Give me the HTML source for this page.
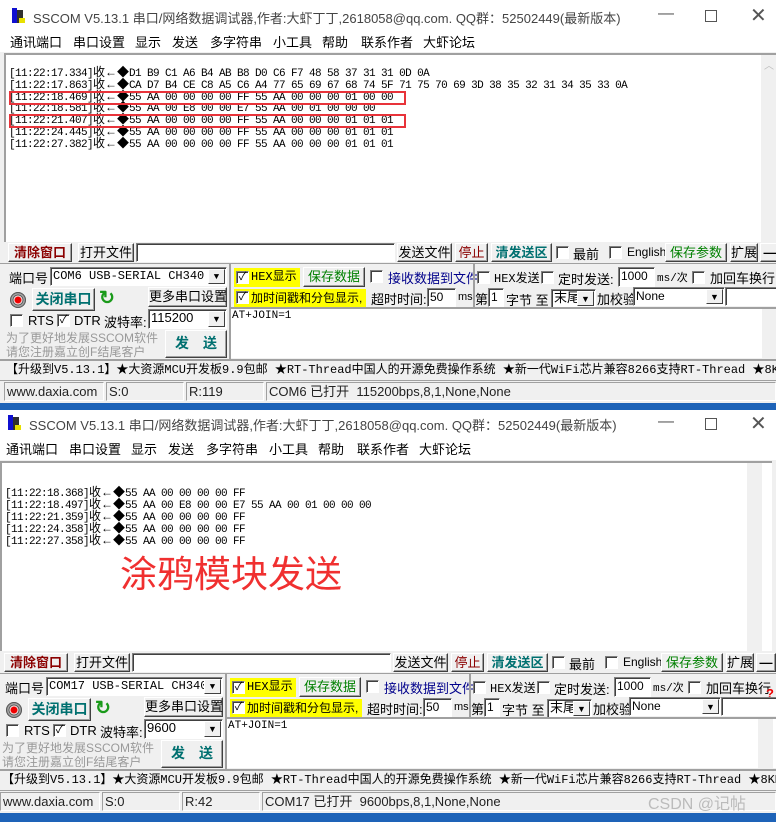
<!DOCTYPE html>
<html><head><meta charset="utf-8"><style>
*{box-sizing:border-box;margin:0;padding:0}
body{width:776px;height:822px;overflow:hidden;background:#1e63b8;position:relative;font-family:"Liberation Sans","Noto Sans CJK SC",sans-serif;font-size:12px;color:#000}
.win{position:absolute;left:0;width:790px;height:403px;background:#f0f0f0;overflow:hidden}
.a{position:absolute;white-space:nowrap}
.title{left:0;top:0;width:100%;height:32px;background:#fff}
.menu{left:0;top:32px;width:100%;height:20px;background:#fff;font-size:13px}
.b{position:absolute;background:#f0f0f0;border:1px solid;border-color:#fff #404040 #404040 #fff;box-shadow:inset -1px -1px 0 #a0a0a0;text-align:center;font-size:13px;line-height:17px;white-space:nowrap}
.in{position:absolute;background:#fff;border:1px solid;border-color:#808080 #fff #fff #808080;box-shadow:inset 1px 1px 0 #404040;font-size:12px;line-height:16px;padding-left:2px;white-space:nowrap;overflow:hidden}
.cb{position:absolute;width:13px;height:13px;background:#fff;border:1px solid;border-color:#808080 #fff #fff #808080;box-shadow:inset 1px 1px 0 #404040;font-size:11px;line-height:11px;text-align:center}
.dd{position:absolute;right:1px;top:1px;width:17px;bottom:1px;background:#f0f0f0;border:1px solid;border-color:#fff #404040 #404040 #fff;font-size:9px;text-align:center;line-height:15px}
.mono{font-family:"Liberation Mono","Noto Sans CJK SC",monospace}
.rx{position:absolute;left:4px;top:53px;width:772px;height:189px;background:#fff;border-top:2px solid #a0a0a0;border-left:2px solid #a0a0a0}
.rx .l{position:absolute;left:3px;font-family:"Liberation Mono","Noto Sans CJK SC",monospace;font-size:11px;letter-spacing:-0.6px;line-height:12px;white-space:nowrap}
.rx .l i{display:inline-block;width:12px;font-style:normal;text-align:center;font-size:12px;line-height:11px;letter-spacing:0}
.sb{position:absolute;right:0;top:0;width:15px;height:100%;background:#f0f0f0}
.st{position:absolute;top:382px;height:19px;border:1px solid;border-color:#a0a0a0 #fff #fff #a0a0a0;font-size:13px;line-height:17px;padding-left:2px;color:#222;white-space:nowrap;overflow:hidden}
.y{position:absolute;background:#ffff00;font-size:12px;line-height:18px;white-space:nowrap}
</style></head><body>

<!-- WINDOW 1 -->
<div class="win" style="top:0">
 <div class="a title">
  <div class="a" style="left:12px;top:8px;width:5px;height:15px;background:#1010d0"></div>
  <div class="a" style="left:17px;top:10px;width:6px;height:13px;background:#303030"></div>
  <div class="a" style="left:19px;top:18px;width:6px;height:5px;background:#e8e000"></div>
  <div class="a" style="left:33px;top:8px;font-size:13px;color:#444">SSCOM V5.13.1 串口/网络数据调试器,作者:大虾丁丁,2618058@qq.com. QQ群：52502449(最新版本)</div>
  <div class="a" style="left:658px;top:5px;font-size:16px;color:#555">—</div>
  <div class="a" style="left:705px;top:10px;width:12px;height:12px;border:1px solid #555"></div>
  <div class="a" style="left:750px;top:3px;font-size:20px;color:#555">✕</div>
 </div>
 <div class="a menu">
  <span class="a" style="left:10px;top:0">通讯端口</span><span class="a" style="left:73px;top:0">串口设置</span><span class="a" style="left:135px;top:0">显示</span><span class="a" style="left:172px;top:0">发送</span><span class="a" style="left:210px;top:0">多字符串</span><span class="a" style="left:273px;top:0">小工具</span><span class="a" style="left:322px;top:0">帮助</span><span class="a" style="left:361px;top:0">联系作者</span><span class="a" style="left:423px;top:0">大虾论坛</span>
 </div>
 <div class="rx">
  <div class="l" style="top:13px">[11:22:17.334]<i>收</i><i>←</i><i>◆</i>D1 B9 C1 A6 B4 AB B8 D0 C6 F7 48 58 37 31 31 0D 0A</div>
  <div class="l" style="top:25px">[11:22:17.863]<i>收</i><i>←</i><i>◆</i>CA D7 B4 CE C8 A5 C6 A4 77 65 69 67 68 74 5F 71 75 70 69 3D 38 35 32 31 34 35 33 0A</div>
  <div class="l" style="top:37px">[11:22:18.469]<i>收</i><i>←</i><i>◆</i>55 AA 00 00 00 00 FF 55 AA 00 00 00 01 00 00</div>
  <div class="l" style="top:48px">[11:22:18.581]<i>收</i><i>←</i><i>◆</i>55 AA 00 E8 00 00 E7 55 AA 00 01 00 00 00</div>
  <div class="l" style="top:60px">[11:22:21.407]<i>收</i><i>←</i><i>◆</i>55 AA 00 00 00 00 FF 55 AA 00 00 00 01 01 01</div>
  <div class="l" style="top:72px">[11:22:24.445]<i>收</i><i>←</i><i>◆</i>55 AA 00 00 00 00 FF 55 AA 00 00 00 01 01 01</div>
  <div class="l" style="top:84px">[11:22:27.382]<i>收</i><i>←</i><i>◆</i>55 AA 00 00 00 00 FF 55 AA 00 00 00 01 01 01</div>
  <div class="a" style="left:3px;top:36px;width:397px;height:14px;border:2px solid #e8333a"></div>
  <div class="a" style="left:3px;top:59px;width:397px;height:14px;border:2px solid #e8333a"></div>
  <div class="sb"><div class="a" style="left:3px;top:2px;color:#bbb;font-size:10px">︿</div></div>
 </div>
 <div class="b" style="left:8px;top:243px;width:64px;height:19px;color:#8b0000;font-weight:bold">清除窗口</div>
 <div class="b" style="left:78px;top:243px;width:56px;height:19px">打开文件</div>
 <div class="in" style="left:136px;top:243px;width:259px;height:19px"></div>
 <div class="b" style="left:397px;top:243px;width:55px;height:19px">发送文件</div>
 <div class="b" style="left:455px;top:243px;width:33px;height:19px;color:#8b0000">停止</div>
 <div class="b" style="left:491px;top:243px;width:61px;height:19px;color:#007070;font-weight:bold">清发送区</div>
 <div class="cb" style="left:556px;top:246px"></div><span class="a" style="left:573px;top:244px;font-size:13px">最前</span>
 <div class="cb" style="left:609px;top:246px"></div><span class="a" style="left:627px;top:245px;font-size:12px">English</span>
 <div class="b" style="left:665px;top:243px;width:62px;height:19px;color:#008000">保存参数</div>
 <div class="b" style="left:730px;top:243px;width:28px;height:19px">扩展</div>
 <div class="b" style="left:760px;top:243px;width:20px;height:19px;font-weight:bold">—</div>
 <div class="a" style="left:0;top:263px;width:790px;height:1px;background:#a0a0a0"></div>
 <span class="a" style="left:9px;top:268px;font-size:13px">端口号</span>
 <div class="in mono" style="left:50px;top:267px;width:177px;height:19px">COM6 USB-SERIAL CH340<div class="dd">▼</div></div>
 <div class="a" style="left:10px;top:292px;width:16px;height:16px;border-radius:50%;background:radial-gradient(circle,#e00 0,#e00 3px,#fff 4px,#444 5px,#bbb 6px,#333 8px)"></div>
 <div class="b" style="left:32px;top:288px;width:63px;height:23px;color:#007070;font-weight:bold;font-size:14px;line-height:20px">关闭串口</div>
 <div class="a" style="left:99px;top:287px;font-size:19px;font-weight:bold;color:#1a9a1a">↻</div>
 <div class="b" style="left:148px;top:287px;width:79px;height:20px">更多串口设置</div>
 <div class="cb" style="left:10px;top:314px"></div><span class="a" style="left:28px;top:313px;font-size:13px">RTS</span>
 <div class="cb" style="left:57px;top:314px">✓</div><span class="a" style="left:74px;top:313px;font-size:13px">DTR</span>
 <span class="a" style="left:104px;top:312px;font-size:13px">波特率:</span>
 <div class="in" style="left:148px;top:309px;width:79px;height:20px;font-size:13px">115200<div class="dd">▼</div></div>
 <div class="a" style="left:6px;top:331px;font-size:12px;line-height:14px;color:#999">为了更好地发展SSCOM软件<br>请您注册嘉立创F结尾客户</div>
 <div class="b" style="left:165px;top:330px;width:62px;height:28px;color:#007070;font-weight:bold;font-size:14px;line-height:25px">发　送</div>
 <div class="a" style="left:229px;top:264px;width:2px;height:95px;background:#a0a0a0"></div>
 <div class="y" style="left:234px;top:268px;width:66px;height:19px"><div class="cb" style="left:2px;top:3px;position:absolute">✓</div><span class="mono" style="position:absolute;left:17px">HEX显示</span></div>
 <div class="b" style="left:303px;top:267px;width:62px;height:20px;color:#008000">保存数据</div>
 <div class="cb" style="left:370px;top:270px"></div><span class="a" style="left:388px;top:268px;font-size:13px;color:#00008b">接收数据到文件</span>
 <div class="a" style="left:473px;top:264px;width:2px;height:44px;background:#a0a0a0"></div>
 <div class="cb" style="left:477px;top:271px"></div><span class="a mono" style="left:494px;top:269px;font-size:12px">HEX发送</span>
 <div class="cb" style="left:541px;top:271px"></div><span class="a" style="left:558px;top:269px;font-size:13px">定时发送:</span>
 <div class="in" style="left:618px;top:267px;width:37px;height:20px;font-size:12px">1000</div>
 <span class="a mono" style="left:657px;top:269px;font-size:11px">ms/次</span>
 <div class="cb" style="left:692px;top:271px"></div><span class="a" style="left:710px;top:268px;font-size:13px">加回车换行</span>
 <div class="y" style="left:234px;top:289px;width:132px;height:18px"><div class="cb" style="left:2px;top:2px;position:absolute">✓</div><span style="position:absolute;left:17px">加时间戳和分包显示,</span></div>
 <span class="a" style="left:371px;top:289px;font-size:13px">超时时间:</span>
 <div class="in" style="left:427px;top:288px;width:29px;height:19px">50</div>
 <span class="a" style="left:458px;top:291px;font-size:11px">ms</span>
 <span class="a" style="left:475px;top:289px;font-size:13px">第</span>
 <div class="in" style="left:488px;top:288px;width:16px;height:19px">1</div>
 <span class="a" style="left:506px;top:290px;font-size:13px">字节 至</span>
 <div class="in" style="left:551px;top:289px;width:45px;height:19px;font-size:13px">末尾<div class="dd">▼</div></div>
 <span class="a" style="left:597px;top:289px;font-size:13px">加校验</span>
 <div class="in" style="left:633px;top:287px;width:92px;height:19px">None<div class="dd">▼</div></div>
 <div class="in" style="left:725px;top:287px;width:60px;height:19px"></div>
 <div class="a" style="left:231px;top:307px;width:560px;height:51px;background:#fff;border-top:2px solid #a0a0a0"><span class="a mono" style="left:1px;top:1px;font-size:11px">AT+JOIN=1</span><div class="a" style="right:14px;top:0;width:15px;height:49px;background:#f0f0f0"></div></div>
 <div class="a" style="left:0;top:359px;width:790px;height:2px;background:#a0a0a0"></div>
 <div class="a mono" style="left:6px;top:362px;font-size:12px;line-height:16px;width:790px;overflow:hidden">【升级到V5.13.1】★大资源MCU开发板9.9包邮 ★RT-Thread中国人的开源免费操作系统 ★新一代WiFi芯片兼容8266支持RT-Thread ★8KM远距离WiFi</div>
 <div class="a" style="left:0;top:380px;width:790px;height:1px;background:#a0a0a0"></div>
 <div class="st" style="left:4px;width:100px">www.daxia.com</div>
 <div class="st" style="left:106px;width:78px">S:0</div>
 <div class="st" style="left:186px;width:78px">R:119</div>
 <div class="st" style="left:266px;width:510px">COM6 已打开 &nbsp;115200bps,8,1,None,None</div>
</div>

<!-- WINDOW 2 -->
<div class="win" style="top:410px;left:-4px">
 <div class="a title" style="height:27px">
  <div class="a" style="left:12px;top:5px;width:5px;height:15px;background:#1010d0"></div>
  <div class="a" style="left:17px;top:7px;width:6px;height:13px;background:#303030"></div>
  <div class="a" style="left:19px;top:15px;width:6px;height:5px;background:#e8e000"></div>
  <div class="a" style="left:33px;top:5px;font-size:13px;color:#444">SSCOM V5.13.1 串口/网络数据调试器,作者:大虾丁丁,2618058@qq.com. QQ群：52502449(最新版本)</div>
  <div class="a" style="left:662px;top:3px;font-size:16px;color:#555">—</div>
  <div class="a" style="left:709px;top:8px;width:12px;height:12px;border:1px solid #555"></div>
  <div class="a" style="left:754px;top:1px;font-size:20px;color:#555">✕</div>
 </div>
 <div class="a menu" style="top:27px;height:23px">
  <span class="a" style="left:10px;top:2px">通讯端口</span><span class="a" style="left:73px;top:2px">串口设置</span><span class="a" style="left:135px;top:2px">显示</span><span class="a" style="left:172px;top:2px">发送</span><span class="a" style="left:210px;top:2px">多字符串</span><span class="a" style="left:273px;top:2px">小工具</span><span class="a" style="left:322px;top:2px">帮助</span><span class="a" style="left:361px;top:2px">联系作者</span><span class="a" style="left:423px;top:2px">大虾论坛</span>
 </div>
 <div class="rx" style="top:51px;height:190px">
  <div class="l" style="top:25px">[11:22:18.368]<i>收</i><i>←</i><i>◆</i>55 AA 00 00 00 00 FF</div>
  <div class="l" style="top:37px">[11:22:18.497]<i>收</i><i>←</i><i>◆</i>55 AA 00 E8 00 00 E7 55 AA 00 01 00 00 00</div>
  <div class="l" style="top:49px">[11:22:21.359]<i>收</i><i>←</i><i>◆</i>55 AA 00 00 00 00 FF</div>
  <div class="l" style="top:61px">[11:22:24.358]<i>收</i><i>←</i><i>◆</i>55 AA 00 00 00 00 FF</div>
  <div class="l" style="top:73px">[11:22:27.358]<i>收</i><i>←</i><i>◆</i>55 AA 00 00 00 00 FF</div>
  <div class="a" style="left:118px;top:81px;font-size:37px;color:#f03030;font-family:'Noto Sans CJK SC',sans-serif">涂鸦模块发送</div>
  <div class="sb" style="right:10px"></div>
 </div>
 <div class="b" style="left:8px;top:243px;width:64px;height:19px;color:#8b0000;font-weight:bold">清除窗口</div>
 <div class="b" style="left:78px;top:243px;width:56px;height:19px">打开文件</div>
 <div class="in" style="left:136px;top:243px;width:259px;height:19px"></div>
 <div class="b" style="left:397px;top:243px;width:55px;height:19px">发送文件</div>
 <div class="b" style="left:455px;top:243px;width:33px;height:19px;color:#8b0000">停止</div>
 <div class="b" style="left:491px;top:243px;width:61px;height:19px;color:#007070;font-weight:bold">清发送区</div>
 <div class="cb" style="left:556px;top:246px"></div><span class="a" style="left:573px;top:244px;font-size:13px">最前</span>
 <div class="cb" style="left:609px;top:246px"></div><span class="a" style="left:627px;top:245px;font-size:12px">English</span>
 <div class="b" style="left:665px;top:243px;width:62px;height:19px;color:#008000">保存参数</div>
 <div class="b" style="left:730px;top:243px;width:28px;height:19px">扩展</div>
 <div class="b" style="left:760px;top:243px;width:20px;height:19px;font-weight:bold">—</div>
 <div class="a" style="left:0;top:263px;width:790px;height:1px;background:#a0a0a0"></div>
 <span class="a" style="left:9px;top:268px;font-size:13px">端口号</span>
 <div class="in mono" style="left:50px;top:267px;width:177px;height:19px">COM17 USB-SERIAL CH340<div class="dd">▼</div></div>
 <div class="a" style="left:10px;top:292px;width:16px;height:16px;border-radius:50%;background:radial-gradient(circle,#e00 0,#e00 3px,#fff 4px,#444 5px,#bbb 6px,#333 8px)"></div>
 <div class="b" style="left:32px;top:288px;width:63px;height:23px;color:#007070;font-weight:bold;font-size:14px;line-height:20px">关闭串口</div>
 <div class="a" style="left:99px;top:287px;font-size:19px;font-weight:bold;color:#1a9a1a">↻</div>
 <div class="b" style="left:148px;top:287px;width:79px;height:20px">更多串口设置</div>
 <div class="cb" style="left:10px;top:314px"></div><span class="a" style="left:28px;top:313px;font-size:13px">RTS</span>
 <div class="cb" style="left:57px;top:314px">✓</div><span class="a" style="left:74px;top:313px;font-size:13px">DTR</span>
 <span class="a" style="left:104px;top:312px;font-size:13px">波特率:</span>
 <div class="in" style="left:148px;top:309px;width:79px;height:20px;font-size:13px">9600<div class="dd">▼</div></div>
 <div class="a" style="left:6px;top:331px;font-size:12px;line-height:14px;color:#999">为了更好地发展SSCOM软件<br>请您注册嘉立创F结尾客户</div>
 <div class="b" style="left:165px;top:330px;width:62px;height:28px;color:#007070;font-weight:bold;font-size:14px;line-height:25px">发　送</div>
 <div class="a" style="left:229px;top:264px;width:2px;height:95px;background:#a0a0a0"></div>
 <div class="y" style="left:234px;top:268px;width:66px;height:19px"><div class="cb" style="left:2px;top:3px;position:absolute">✓</div><span class="mono" style="position:absolute;left:17px">HEX显示</span></div>
 <div class="b" style="left:303px;top:267px;width:62px;height:20px;color:#008000">保存数据</div>
 <div class="cb" style="left:370px;top:270px"></div><span class="a" style="left:388px;top:268px;font-size:13px;color:#00008b">接收数据到文件</span>
 <div class="a" style="left:473px;top:264px;width:2px;height:44px;background:#a0a0a0"></div>
 <div class="cb" style="left:477px;top:271px"></div><span class="a mono" style="left:494px;top:269px;font-size:12px">HEX发送</span>
 <div class="cb" style="left:541px;top:271px"></div><span class="a" style="left:558px;top:269px;font-size:13px">定时发送:</span>
 <div class="in" style="left:618px;top:267px;width:37px;height:20px;font-size:12px">1000</div>
 <span class="a mono" style="left:657px;top:269px;font-size:11px">ms/次</span>
 <div class="cb" style="left:692px;top:271px"></div><span class="a" style="left:710px;top:268px;font-size:13px">加回车换行</span>
 <div class="a" style="left:770px;top:276px;color:#e00;font-weight:bold;font-size:13px">?</div>
 <div class="y" style="left:234px;top:289px;width:132px;height:18px"><div class="cb" style="left:2px;top:2px;position:absolute">✓</div><span style="position:absolute;left:17px">加时间戳和分包显示,</span></div>
 <span class="a" style="left:371px;top:289px;font-size:13px">超时时间:</span>
 <div class="in" style="left:427px;top:288px;width:29px;height:19px">50</div>
 <span class="a" style="left:458px;top:291px;font-size:11px">ms</span>
 <span class="a" style="left:475px;top:289px;font-size:13px">第</span>
 <div class="in" style="left:488px;top:288px;width:16px;height:19px">1</div>
 <span class="a" style="left:506px;top:290px;font-size:13px">字节 至</span>
 <div class="in" style="left:551px;top:289px;width:45px;height:19px;font-size:13px">末尾<div class="dd">▼</div></div>
 <span class="a" style="left:597px;top:289px;font-size:13px">加校验</span>
 <div class="in" style="left:633px;top:287px;width:92px;height:19px">None<div class="dd">▼</div></div>
 <div class="in" style="left:725px;top:287px;width:60px;height:19px"></div>
 <div class="a" style="left:231px;top:307px;width:560px;height:51px;background:#fff;border-top:2px solid #a0a0a0"><span class="a mono" style="left:1px;top:1px;font-size:11px">AT+JOIN=1</span><div class="a" style="right:14px;top:0;width:15px;height:49px;background:#f0f0f0"></div></div>
 <div class="a" style="left:0;top:359px;width:790px;height:2px;background:#a0a0a0"></div>
 <div class="a mono" style="left:6px;top:362px;font-size:12px;line-height:16px;width:790px;overflow:hidden">【升级到V5.13.1】★大资源MCU开发板9.9包邮 ★RT-Thread中国人的开源免费操作系统 ★新一代WiFi芯片兼容8266支持RT-Thread ★8KM远距离WiFi</div>
 <div class="a" style="left:0;top:380px;width:790px;height:1px;background:#a0a0a0"></div>
 <div class="st" style="left:4px;width:100px">www.daxia.com</div>
 <div class="st" style="left:106px;width:78px">S:0</div>
 <div class="st" style="left:186px;width:78px">R:42</div>
 <div class="st" style="left:266px;width:514px">COM17 已打开 &nbsp;9600bps,8,1,None,None</div>
 <div class="a" style="left:652px;top:380px;font-size:16px;color:#bbb">CSDN @记帖</div>
</div>
</body></html>
